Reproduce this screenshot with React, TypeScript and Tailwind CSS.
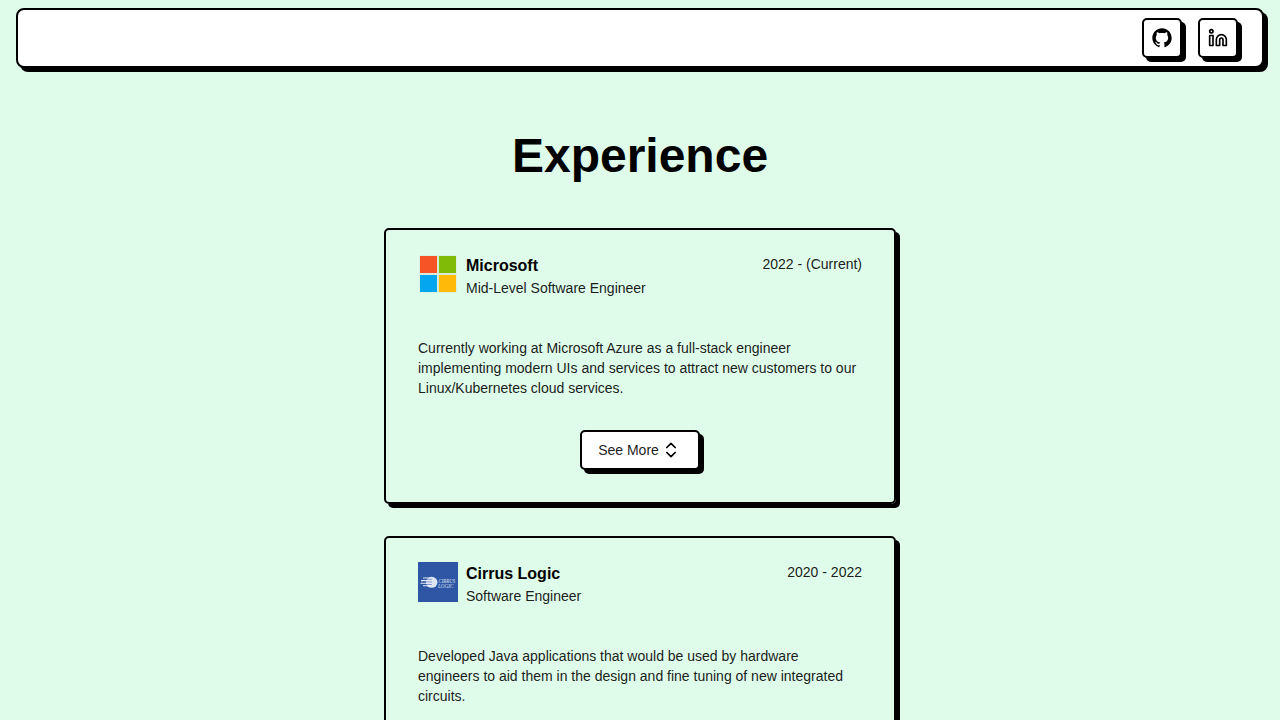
import type { ReactNode } from "react";
import { ChevronsUpDown, Linkedin } from "lucide-react";
import { RxGithubLogo } from "react-icons/rx";

const raised = "border-2 border-black shadow-[4px_4px_0_0_#000]";

function IconButton({ label, children }: { label: string; children: ReactNode }) {
  return (
    <button aria-label={label} className={`flex size-10 items-center justify-center rounded-[5px] bg-white ${raised}`}>
      {children}
    </button>
  );
}

function MicrosoftLogo() {
  return (
    <svg viewBox="0 0 40 40" className="size-10">
      <path fill="#d8ecd9" d="M1.4 1.4h37.2v37.2H1.4z" />
      <path fill="#f65426" d="M2 2h17v17H2z" />
      <path fill="#80bb08" d="M21 2h17v17H21z" />
      <path fill="#04a6f0" d="M2 21h17v17H2z" />
      <path fill="#ffb908" d="M21 21h17v17H21z" />
    </svg>
  );
}

function CirrusLogo() {
  return (
    <svg viewBox="0 0 40 40" className="size-10 bg-[#2f55a5]">
      <ellipse cx="13.7" cy="20.3" rx="5.8" ry="5.5" fill="#dfe6f3" />
      <path d="M5 16h8M3 18.6h11M2.5 21.2h11M5 23.8h8" stroke="#e8edf7" strokeWidth="1.1" />
      <path d="M6 17.3h8M5 19.9h9M5 22.5h9" stroke="#2f55a5" strokeWidth=".5" />
      <g fill="#dbe3f2" fontFamily="Liberation Serif, serif" fontSize="6.4" fontStyle="italic">
        <text x="20.5" y="20.8" textLength="16.6" lengthAdjust="spacingAndGlyphs">CIRRUS</text>
        <text x="20" y="25.8" textLength="15.5" lengthAdjust="spacingAndGlyphs">LOGIC</text>
      </g>
    </svg>
  );
}

type Job = { company: string; role: string; period: string; summary: string; logo: ReactNode };

const jobs: Job[] = [
  {
    company: "Microsoft",
    role: "Mid-Level Software Engineer",
    period: "2022 - (Current)",
    summary:
      "Currently working at Microsoft Azure as a full-stack engineer implementing modern UIs and services to attract new customers to our Linux/Kubernetes cloud services.",
    logo: <MicrosoftLogo />,
  },
  {
    company: "Cirrus Logic",
    role: "Software Engineer",
    period: "2020 - 2022",
    summary:
      "Developed Java applications that would be used by hardware engineers to aid them in the design and fine tuning of new integrated circuits.",
    logo: <CirrusLogo />,
  },
];

function JobCard({ job }: { job: Job }) {
  return (
    <article className={`rounded-[5px] px-8 pt-6 pb-8 ${raised}`}>
      <header className="flex items-start gap-2">
        {job.logo}
        <div className="flex-1">
          <h2 className="text-base leading-6 font-bold">{job.company}</h2>
          <p className="text-sm text-black/90">{job.role}</p>
        </div>
        <p className="text-sm text-black/90">{job.period}</p>
      </header>
      <p className="mt-10 text-sm text-black/90">{job.summary}</p>
      <div className="mt-8 flex justify-center">
        <button className={`flex h-10 items-center gap-0.5 rounded-[5px] bg-white pr-[17px] pl-4 text-sm ${raised}`}>
          <span className="text-black/90">See More</span>
          <ChevronsUpDown className="size-5" />
        </button>
      </div>
    </article>
  );
}

export default function App() {
  return (
    <div className="h-screen overflow-hidden bg-[#dffbe9] font-['Liberation_Sans',Arial,sans-serif] text-black">
      <nav className={`mx-4 mt-2 flex h-15 items-center justify-end gap-4 rounded-lg bg-white px-6 ${raised}`}>
        <IconButton label="GitHub"><RxGithubLogo className="size-5" /></IconButton>
        <IconButton label="LinkedIn"><Linkedin className="size-5" /></IconButton>
      </nav>
      <main className="mx-auto w-lg pt-16">
        <h1 className="text-center text-5xl font-bold">Experience</h1>
        <div className="mt-12 flex flex-col gap-8">
          {jobs.map((job) => <JobCard key={job.company} job={job} />)}
        </div>
      </main>
    </div>
  );
}
